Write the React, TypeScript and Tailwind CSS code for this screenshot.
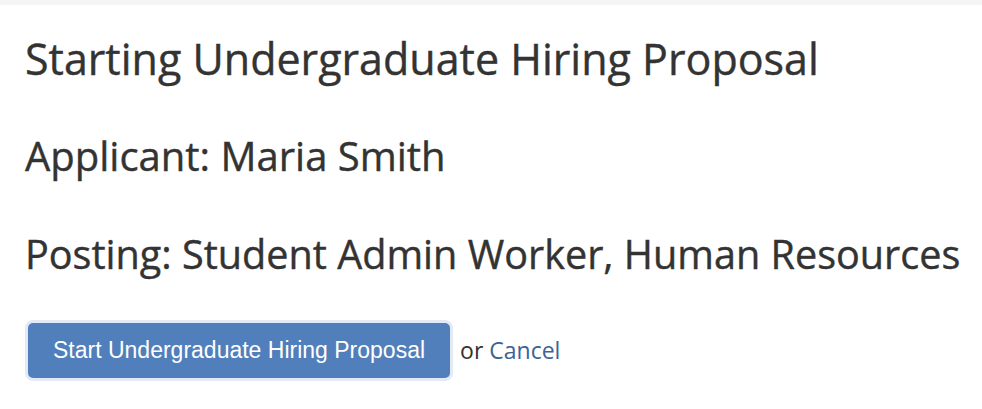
import React from "react";

export default function App() {
  return (
    <div className="min-h-[409px] bg-white font-['Open_Sans',sans-serif] text-[#333333]">
      <div className="h-[5px] bg-[#f5f5f5]" />
      <div className="px-[25px]">
        <h1 className="mt-[26px] text-[43px] leading-[56px] font-normal [-webkit-text-stroke:0.4px_#333333]">
          Starting Undergraduate Hiring Proposal
        </h1>
        <h2 className="mt-[46px] text-[40px] leading-[46px] font-normal [-webkit-text-stroke:0.4px_#333333]">
          Applicant: Maria Smith
        </h2>
        <h2 className="mt-[52px] text-[39.6px] leading-[46px] font-normal whitespace-nowrap [-webkit-text-stroke:0.4px_#333333]">
          Posting: Student Admin Worker, Human Resources
        </h2>
        <div className="mt-[46px] flex items-center">
          <button className="ml-[3px] h-[55px] rounded-[5px] bg-[#507fbb] px-[25px] font-['Liberation_Sans',sans-serif] text-[23px] text-white ring-[3px] ring-[#e3eaf5]">
            Start Undergraduate Hiring Proposal
          </button>
          <span className="ml-[10px] text-[23px]">
            or <a className="text-[#3b6494]">Cancel</a>
          </span>
        </div>
      </div>
    </div>
  );
}
